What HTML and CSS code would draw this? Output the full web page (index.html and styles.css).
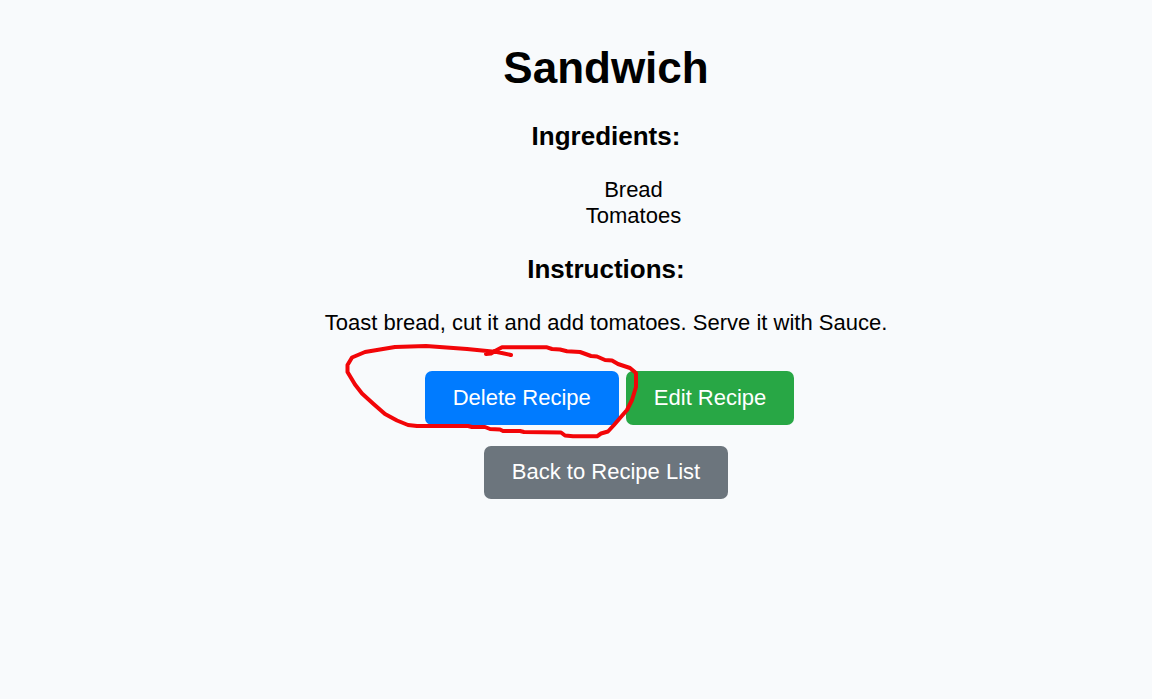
FILE: index.html
```html
<!DOCTYPE html>
<html lang="en">
<head>
<meta charset="utf-8">
<meta name="viewport" content="width=device-width, initial-scale=1">
<title>Sandwich</title>
<link rel="stylesheet" href="styles.css">
</head>
<body>
<main class="recipe">
  <h1 class="title">Sandwich</h1>
  <h3 class="heading">Ingredients:</h3>
  <ul class="ingredients">
    <li>Bread</li>
    <li>Tomatoes</li>
  </ul>
  <h3 class="heading">Instructions:</h3>
  <p class="instructions">Toast bread, cut it and add tomatoes. Serve it with Sauce.</p>
  <div class="actions">
    <div class="marked">
      <button class="btn btn-delete" type="button">Delete Recipe</button>
      <svg class="scribble" width="300" height="100" viewBox="340 340 300 100" aria-hidden="true">
        <path d="M511 355L497 352L467 349L426 346L395 347L365 352L352 357.500L347.500 365L347.500 372L355 384.500L362 393.500L373 403.500L385 414L397 420.500L408 425L417 426L468 426L472 427L485 427L490 429L500 429.500L503 431L520 431L524 432L561 432.500L565 435.500L573 436.300L597 436.300L601 433.500L608 431.500L614 425L620 418L627 410L632 400L636 387L636 373L630 368L618 364L612 360.500L605 360L597 356.500L591 356L580 352L567 351.300L560 349.500L552 349L547 347.300L502 347.300L495 351L491 353.500L486 354"/>
      </svg>
    </div>
    <button class="btn btn-edit" type="button">Edit Recipe</button>
  </div>
  <a class="btn btn-back" href="#recipes">Back to Recipe List</a>
</main>
</body>
</html>
```
FILE: styles.css
```css
body {
  margin: 0;
  background: #f8fafc;
  color: #000;
  font-family: "Liberation Sans", Arial, sans-serif;
  font-size: 22px;
  line-height: 26px;
}

.recipe {
  display: flex;
  flex-direction: column;
  align-items: center;
  padding: 42px 0 42px 60px;
}

.title {
  margin: 0 0 27px;
  font-size: 44px;
  line-height: 52px;
}

.heading {
  margin: 0 0 26px;
  font-size: 26px;
  line-height: 30px;
}

.ingredients {
  margin: 0 0 25px;
  padding: 0 0 0 55px;
  list-style: none;
  text-align: center;
}

.instructions {
  margin: 0 0 35px;
}

.actions {
  display: flex;
  gap: 7px;
  margin-bottom: 21px;
  padding-left: 7px;
}

.marked {
  position: relative;
}

.btn {
  display: block;
  padding: 14px 28px;
  border: 0;
  border-radius: 7px;
  color: #fff;
  font: inherit;
  line-height: 26px;
  text-decoration: none;
  cursor: pointer;
}

.btn-delete {
  background: #007bff;
}

.btn-edit {
  background: #28a745;
}

.btn-back {
  padding-top: 13px;
  background: #6c757d;
}

.scribble {
  position: absolute;
  z-index: 1;
  top: -31px;
  left: -85px;
  fill: none;
  stroke: #f20508;
  stroke-width: 4;
  stroke-linecap: round;
  stroke-linejoin: round;
  pointer-events: none;
}
```
